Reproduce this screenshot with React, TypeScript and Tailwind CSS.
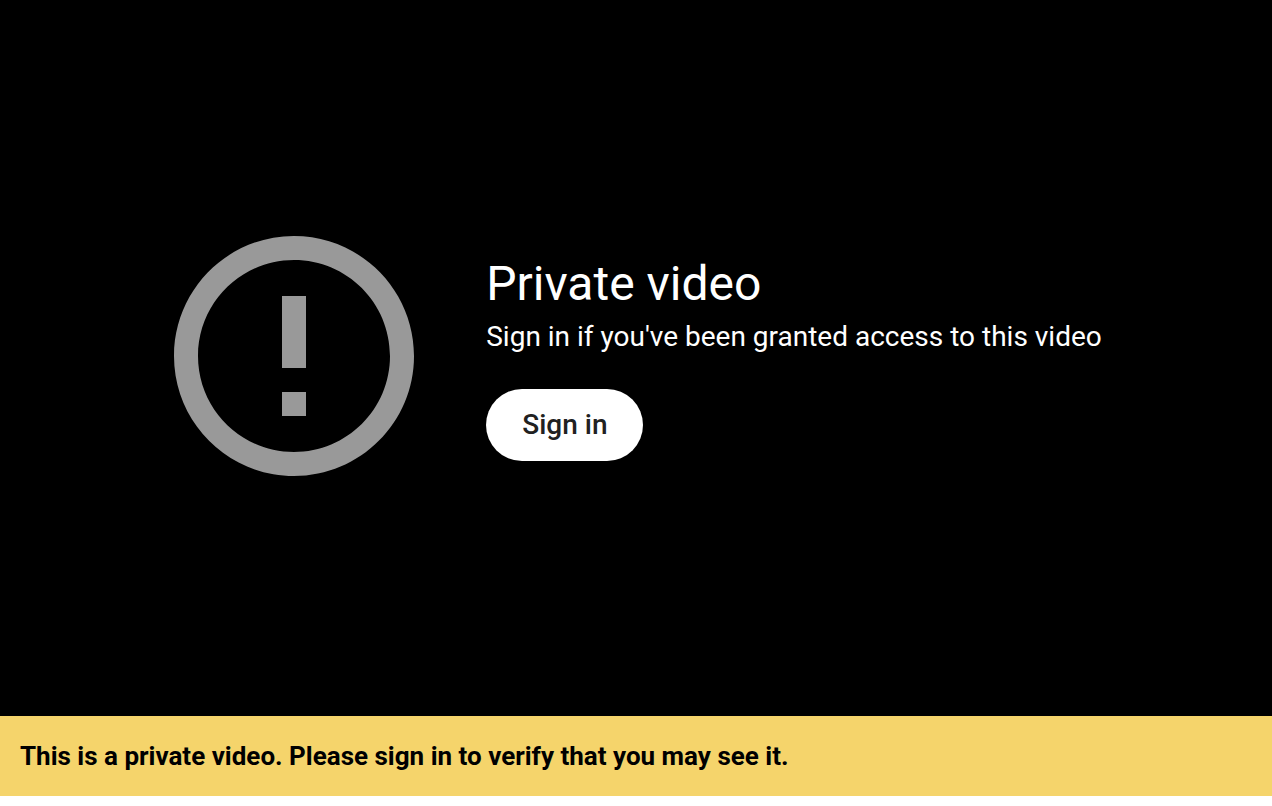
import React from 'react';

const ErrorIcon = () => (
  <svg viewBox="0 0 24 24" className="w-72 h-72 shrink-0" fill="#999999" aria-hidden="true">
    <path d="M11 15h2v2h-2zm0-8h2v6h-2zm.99-5C6.47 2 2 6.48 2 12s4.47 10 9.99 10C17.52 22 22 17.52 22 12S17.52 2 11.99 2zM12 20c-4.42 0-8-3.58-8-8s3.58-8 8-8 8 3.58 8 8-3.58 8-8 8z" />
  </svg>
);

const App = () => {
  return (
    <div className="min-h-screen flex flex-col bg-white pb-[10px] font-[Roboto,sans-serif]">
      <main className="flex-1 flex items-center justify-center bg-black text-white pb-1">
        <ErrorIcon />
        <div className="ml-12 pr-5 pt-1">
          <h1 className="text-5xl leading-[58px]">Private video</h1>
          <p className="mt-1 text-[28px] leading-10">
            Sign in if you've been granted access to this video
          </p>
          <button
            type="button"
            className="mt-8 h-[72px] px-9 rounded-full bg-white text-[#212121] text-[28px] font-medium"
          >
            Sign in
          </button>
        </div>
      </main>
      <div role="alert" className="bg-[#f5d46b] px-5 py-5 text-[26px] leading-10 font-bold text-black">
        This is a private video. Please sign in to verify that you may see it.
      </div>
    </div>
  );
};

export default App;
